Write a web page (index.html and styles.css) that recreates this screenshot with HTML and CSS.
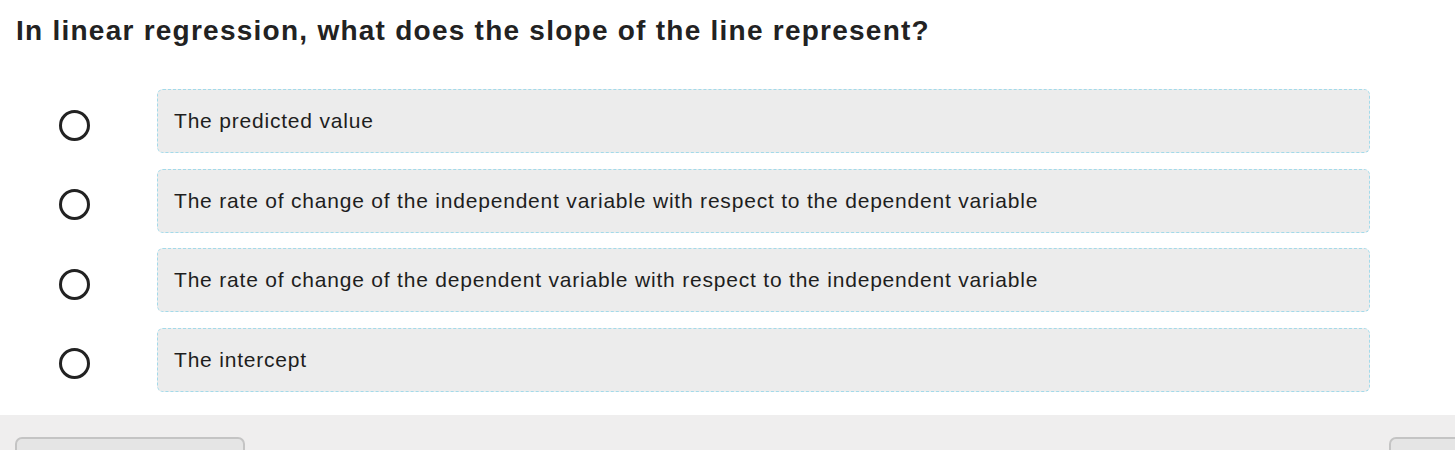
FILE: index.html
```html
<!DOCTYPE html>
<html>
<head>
<meta charset="utf-8">
<link rel="stylesheet" href="styles.css">
</head>
<body>
<main class="quiz">
  <h1 class="question">In linear regression, what does the slope of the line represent?</h1>
  <ul class="options">
    <li class="option"><span class="radio"></span><div class="answer">The predicted value</div></li>
    <li class="option"><span class="radio"></span><div class="answer">The rate of change of the independent variable with respect to the dependent variable</div></li>
    <li class="option"><span class="radio"></span><div class="answer">The rate of change of the dependent variable with respect to the independent variable</div></li>
    <li class="option"><span class="radio"></span><div class="answer">The intercept</div></li>
  </ul>
</main>
<footer class="footer">
  <button class="btn btn-left"></button>
  <button class="btn btn-right"></button>
</footer>
</body>
</html>
```

FILE: styles.css
```css
html, body {
  margin: 0;
  padding: 0;
  background: #ffffff;
  font-family: "Liberation Sans", Arial, sans-serif;
  color: #222222;
}

.quiz {
  padding: 14px 85px 23px 16px;
}

.question {
  margin: 0;
  font-size: 28px;
  font-weight: bold;
  line-height: 34px;
  color: #222222;
  letter-spacing: 1.25px;
}

.options {
  list-style: none;
  margin: 41px 0 0 0;
  padding: 0;
  display: flex;
  flex-direction: column;
  gap: 15.5px;
}

.option {
  display: flex;
  align-items: center;
}

.radio {
  box-sizing: border-box;
  width: 31px;
  height: 31px;
  border: 3.5px solid #222222;
  border-radius: 50%;
  margin-left: 43px;
  margin-right: 67px;
  margin-top: 8px;
  flex: none;
}

.answer {
  flex: 1;
  box-sizing: border-box;
  height: 64px;
  display: flex;
  align-items: center;
  padding-left: 16px;
  background: #ececec;
  border: 1px dashed #a3daea;
  border-radius: 6px;
  font-size: 21px;
  letter-spacing: 0.8px;
  color: #1e1e1e;
}

.footer {
  background: #efeeee;
  box-sizing: border-box;
  height: 36px;
  display: flex;
  justify-content: space-between;
  align-items: flex-start;
  padding: 22px 0 0 15px;
  overflow: hidden;
}

.btn {
  flex: none;
  width: 230px;
  height: 40px;
  background: #e5e5e5;
  border: 2px solid #c4c4c4;
  border-radius: 7px;
  padding: 0;
}

.btn-right {
  width: 100px;
  margin-right: -34px;
}
```
